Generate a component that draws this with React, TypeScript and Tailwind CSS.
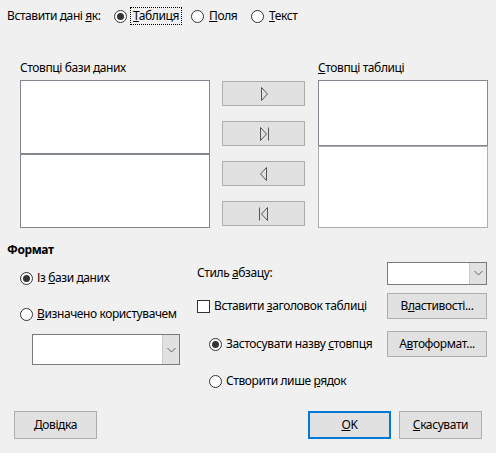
import React from 'react';

const Radio = ({ checked }: { checked?: boolean }) => (
  <span className="w-[13px] h-[13px] rounded-full border border-[#333333] bg-white flex items-center justify-center shrink-0">
    {checked && <span className="w-[7px] h-[7px] rounded-full bg-[#333333]" />}
  </span>
);

const Btn = ({ children, className = '' }: { children: React.ReactNode; className?: string }) => (
  <div className={`bg-[#e1e1e1] border border-[#adadad] flex items-center justify-center ${className}`}>{children}</div>
);

const Combo = ({ className = '' }: { className?: string }) => (
  <div className={`bg-white border border-[#7a7a7a] flex justify-end ${className}`}>
    <div className="w-[17px] bg-[#e1e1e1] border-l border-[#cccccc] flex items-center justify-center">
      <svg width="9" height="6" viewBox="0 0 9 6">
        <path d="M0.5 1 L4.5 5 L8.5 1" fill="none" stroke="#606060" strokeWidth="1" />
      </svg>
    </div>
  </div>
);

const Arrow = ({ dir, bar }: { dir: 'r' | 'l'; bar?: boolean }) => (
  <svg width="16" height="16" viewBox="0 0 16 16">
    {dir === 'r' ? (
      <>
        <path d={bar ? 'M4.5 1.5 L10.5 8 L4.5 14.5 Z' : 'M5.5 1.5 L11.5 8 L5.5 14.5 Z'} fill="none" stroke="#555555" strokeWidth="1" />
        {bar && <path d="M12.5 1.5 V14.5" stroke="#555555" strokeWidth="1" />}
      </>
    ) : (
      <>
        <path d={bar ? 'M11.5 1.5 L5.5 8 L11.5 14.5 Z' : 'M10.5 1.5 L4.5 8 L10.5 14.5 Z'} fill="none" stroke="#555555" strokeWidth="1" />
        {bar && <path d="M3.5 1.5 V14.5" stroke="#555555" strokeWidth="1" />}
      </>
    )}
  </svg>
);

export default function App() {
  return (
    <div className="w-[496px] h-[453px] bg-[#f0f0f0] text-[12px] leading-[16px] tracking-[-0.4px] text-black font-['Segoe_UI','Noto_Sans',sans-serif] flex flex-col overflow-hidden">
      {/* Insert as */}
      <div className="h-[32px] flex items-center pl-[7px]">
        <span className="w-[107px]">Вставити дані <u>я</u>к:</span>
        <span className="w-[77px] flex items-center">
          <Radio checked />
          <span className="ml-[3px] px-[2px] border border-dotted border-black">
            <u>Т</u>аблиця
          </span>
        </span>
        <span className="w-[60px] flex items-center gap-[5px]">
          <Radio />
          <span><u>П</u>оля</span>
        </span>
        <span className="flex items-center gap-[5px]">
          <Radio />
          <span><u>Т</u>екст</span>
        </span>
      </div>

      {/* Columns */}
      <div className="mt-[28px] flex pl-[20px]">
        <div className="w-[190px] flex flex-col">
          <div className="h-[16px] mb-[4px]">Стовпці бази <u>д</u>аних</div>
          <div className="h-[74px] bg-white border border-[#828790]" />
          <div className="h-[74px] bg-white border border-[#828790]" />
        </div>
        <div className="ml-[12px] w-[83px] flex flex-col gap-[15px] pt-[21px]">
          <Btn className="h-[25px]"><Arrow dir="r" /></Btn>
          <Btn className="h-[25px]"><Arrow dir="r" bar /></Btn>
          <Btn className="h-[25px]"><Arrow dir="l" /></Btn>
          <Btn className="h-[25px]"><Arrow dir="l" bar /></Btn>
        </div>
        <div className="ml-[13px] w-[170px] flex flex-col">
          <div className="h-[16px] mb-[4px]"><u>С</u>товпці таблиці</div>
          <div className="h-[66px] bg-white border border-[#828790]" />
          <div className="h-[82px] bg-white border border-[#abadb3]" />
        </div>
      </div>

      {/* Format */}
      <div className="mt-[14px] pl-[7px] font-bold h-[16px]">Формат</div>
      <div className="flex">
        <div className="w-[197px] pl-[20px] flex flex-col">
          <div className="mt-[10px] h-[20px] flex items-center gap-[4px]">
            <Radio checked />
            <span>Із <u>б</u>ази даних</span>
          </div>
          <div className="mt-[16px] h-[20px] flex items-center gap-[4px]">
            <Radio />
            <span><u>В</u>изначено користувачем</span>
          </div>
          <Combo className="mt-[10px] ml-[12px] w-[148px] h-[31px]" />
        </div>
        <div className="w-[290px] flex flex-col">
          <div className="mt-[4px] h-[22px] flex items-center justify-between">
            <span>Стиль <u>а</u>бзацу:</span>
            <Combo className="w-[100px] h-[23px]" />
          </div>
          <div className="mt-[9px] h-[26px] flex items-center justify-between">
            <span className="flex items-center gap-[4px]">
              <span className="w-[13px] h-[13px] border border-[#333333] bg-white" />
              <span>Вставити <u>з</u>аголовок таблиці</span>
            </span>
            <Btn className="w-[100px] h-[26px]">В<u>л</u>астивості...</Btn>
          </div>
          <div className="mt-[12px] h-[26px] flex items-center justify-between">
            <span className="ml-[12px] flex items-center gap-[4px]">
              <Radio checked />
              <span>Застосувати назву <u>с</u>товпця</span>
            </span>
            <Btn className="w-[100px] h-[26px]">А<u>в</u>тоформат...</Btn>
          </div>
          <div className="mt-[14px] h-[20px] ml-[12px] flex items-center gap-[4px]">
            <Radio />
            <span>Створити лише <u>р</u>ядок</span>
          </div>
        </div>
      </div>

      {/* Bottom */}
      <div className="mt-[20px] flex px-[14px]">
        <Btn className="w-[83px] h-[28px]"><u>Д</u>овідка</Btn>
        <div className="flex-1" />
        <div className="w-[83px] h-[28px] bg-[#e1e1e1] border-2 border-[#0078d7] flex items-center justify-center">
          <u>O</u>K
        </div>
        <Btn className="ml-[8px] w-[83px] h-[28px]"><u>С</u>касувати</Btn>
      </div>
    </div>
  );
}
